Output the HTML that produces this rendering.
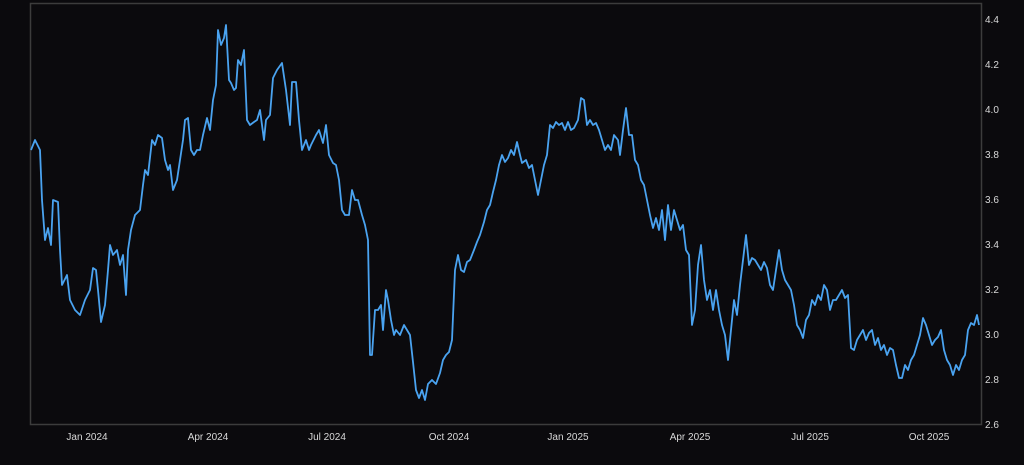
<!DOCTYPE html><html><head><style>html,body{margin:0;background:#0b0a0d;width:1024px;height:465px;overflow:hidden}svg text{font-family:"Liberation Sans",sans-serif;font-size:10px;fill:#d8d8d8}</style></head><body>
<svg width="1024" height="465">
<rect x="30.5" y="3.5" width="951" height="421" fill="none" stroke="#3c3c3c" stroke-width="1.5"/>
<polyline fill="none" stroke="#4aa3f0" stroke-width="1.8" stroke-linejoin="round" points="31,150 35,140 40,150 42,200 45,240 48,228 51,245 53,200 58,202 60,250 62,285 67,275 70,300 75,310 80,315 85,300 90,290 93,268 96,270 98,290 101,322 105,305 108,270 110,245 113,255 117,250 120,265 123,255 126,295 128,250 131,230 135,215 140,210 143,185 145,170 148,175 152,140 155,145 158,135 162,138 165,160 168,170 170,165 173,190 177,180 180,160 183,140 185,120 188,118 191,150 194,155 197,150 200,150 203,135 207,118 210,130 213,100 216,85 218,30 221,45 224,38 226,25 229,80 231,83 234,90 236,88 238,60 241,65 244,50 247,120 250,125 254,122 257,120 260,110 264,140 266,120 270,115 273,78 277,70 282,63 286,90 290,125 292,82 296,82 299,120 302,150 306,140 309,150 311,145 316,135 319,130 323,143 326,125 329,155 333,163 336,165 339,180 342,210 345,215 349,215 352,190 355,200 358,200 362,215 365,225 368,240 370,355 372,355 375,310 378,310 381,305 383,330 386,290 388,300 391,320 394,335 396,330 400,335 404,325 407,330 410,335 413,362 416,390 419,398 422,390 425,400 428,384 432,380 436,384 440,373 443,360 446,355 449,352 452,340 455,270 458,255 461,270 464,272 467,262 470,260 474,250 477,242 480,235 484,222 487,210 490,205 493,192 496,180 499,165 502,155 505,162 508,158 511,150 514,155 517,142 520,155 522,163 526,160 529,168 532,165 535,180 538,195 541,180 544,165 547,155 550,125 553,128 556,122 559,125 562,123 565,130 568,122 571,130 574,128 578,120 581,98 584,100 587,125 590,120 593,125 596,123 599,130 602,140 605,150 608,145 611,150 614,135 618,140 620,155 623,130 626,108 629,135 632,135 635,160 638,165 641,180 644,185 647,200 650,215 653,228 656,218 659,230 662,210 665,240 668,205 671,230 674,210 677,220 680,230 683,225 686,250 689,255 692,325 695,310 698,265 701,245 704,280 707,300 710,290 713,310 716,290 719,310 722,325 725,335 728,360 731,330 734,300 737,315 740,285 743,260 746,235 749,265 752,258 755,260 758,265 761,270 764,262 767,268 770,285 773,290 776,270 779,250 782,270 785,280 788,285 791,290 794,305 797,325 800,330 803,338 806,320 809,315 812,300 815,305 818,295 821,300 824,285 827,290 830,310 833,300 836,300 839,295 842,290 845,298 848,295 851,348 854,350 857,340 860,335 863,330 866,340 869,333 872,330 875,345 878,338 881,350 884,345 887,355 890,348 893,350 896,365 899,378 902,378 905,365 908,370 911,360 914,355 917,345 920,335 923,318 926,325 929,335 932,345 935,340 938,337 941,330 944,350 947,360 950,365 953,375 956,365 959,370 962,360 965,355 968,330 971,323 974,325 977,315 979,325"/>
<g text-anchor="start">
<text x="985" y="23">4.4</text><text x="985" y="68">4.2</text><text x="985" y="113">4.0</text><text x="985" y="158">3.8</text><text x="985" y="203">3.6</text><text x="985" y="248">3.4</text><text x="985" y="293">3.2</text><text x="985" y="338">3.0</text><text x="985" y="383">2.8</text><text x="985" y="428">2.6</text>
</g>
<g text-anchor="middle">
<text x="87" y="440">Jan 2024</text><text x="208" y="440">Apr 2024</text><text x="327" y="440">Jul 2024</text><text x="449" y="440">Oct 2024</text><text x="568" y="440">Jan 2025</text><text x="690" y="440">Apr 2025</text><text x="810" y="440">Jul 2025</text><text x="929" y="440">Oct 2025</text>
</g>
</svg></body></html>
